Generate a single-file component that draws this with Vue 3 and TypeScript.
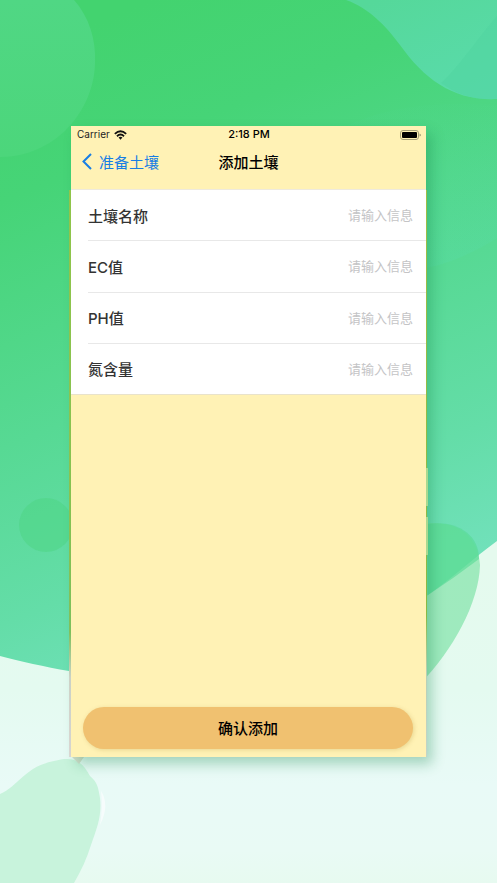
<script setup lang="ts">
import { reactive } from 'vue'

interface Field {
  id: string
  label: string
}

const fields: Field[] = [
  { id: 'name', label: '土壤名称' },
  { id: 'ec', label: 'EC值' },
  { id: 'ph', label: 'PH值' },
  { id: 'nitrogen', label: '氮含量' },
]

const values = reactive<Record<string, string>>({ name: '', ec: '', ph: '', nitrogen: '' })

function submit() {
  for (const field of fields) values[field.id] = values[field.id].trim()
}
</script>

<template>
  <div class="page">
    <svg class="backdrop" viewBox="0 0 497 883" preserveAspectRatio="none" aria-hidden="true">
      <defs>
        <linearGradient id="green" gradientUnits="userSpaceOnUse" x1="150" y1="0" x2="400" y2="600">
          <stop offset="0" stop-color="#43d36f" />
          <stop offset="0.2" stop-color="#46d477" />
          <stop offset="0.55" stop-color="#57d994" />
          <stop offset="0.8" stop-color="#64dda8" />
          <stop offset="1" stop-color="#72e1bc" />
        </linearGradient>
        <linearGradient id="pale" gradientUnits="userSpaceOnUse" x1="0" y1="560" x2="0" y2="883">
          <stop offset="0" stop-color="#e5faee" />
          <stop offset="0.4" stop-color="#e4faf0" />
          <stop offset="0.7" stop-color="#e9faf7" />
          <stop offset="0.9" stop-color="#e9faf5" />
          <stop offset="1" stop-color="#e7faf0" />
        </linearGradient>
        <linearGradient id="orb" x1="0" y1="0" x2="0" y2="1">
          <stop offset="0" stop-color="#50d784" />
          <stop offset="1" stop-color="#4cd67b" />
        </linearGradient>
        <linearGradient id="wave" x1="0.2" y1="0" x2="0.9" y2="1">
          <stop offset="0" stop-color="#55d89a" />
          <stop offset="1" stop-color="#5adbac" />
        </linearGradient>
        <linearGradient id="mist" x1="0" y1="0" x2="0" y2="1">
          <stop offset="0" stop-color="#58dba8" stop-opacity="0.1" />
          <stop offset="1" stop-color="#58dcae" stop-opacity="0.7" />
        </linearGradient>
        <linearGradient id="edge" x1="0" y1="0" x2="0" y2="1">
          <stop offset="0" stop-color="#98c94b" />
          <stop offset="0.55" stop-color="#8cc653" />
          <stop offset="0.78" stop-color="#84c45f" />
          <stop offset="0.86" stop-color="#d5d6cd" />
          <stop offset="1" stop-color="#e2dad8" />
        </linearGradient>
      </defs>
      <rect width="497" height="883" fill="url(#pale)" />
      <path d="M0 0H497V541C475 557 452 578 428 595C350 648 190 684 69 671C45 667 20 661 0 656Z" fill="url(#green)" />
      <path d="M0 0H74C89 17 96 39 95 63C94 111 55 157 0 157Z" fill="url(#orb)" />
      <path d="M346 0C369 8 386 26 400 45C425 80 454 101 497 99V0Z" fill="url(#wave)" />
      <path d="M497 16C480 35 460 66 441 83C458 95 474 100 497 99Z" fill="#4fd49f" fill-opacity="0.5" />
      <path d="M348 125C388 108 425 101 497 105V238C465 258 440 266 420 269V125Z" fill="url(#mist)" opacity="0.35" />
      <circle cx="46" cy="525" r="27" fill="#4fd585" fill-opacity="0.55" />
      <path d="M410 527C444 516 478 528 480 565C479 603 453 650 420 684V600Z" fill="#70e09c" fill-opacity="0.6" />
      <path d="M428 524C455 520 479 533 479 559Q454 578 428 595Z" fill="#56da94" fill-opacity="0.6" />
      <path d="M0 794C19 786 24 767 54 761C75 755 83 763 90 776C97 782 98 786 100 798C102 816 97 828 91 845C87 858 81 871 74 883H0Z" fill="#c8f3dc" />
      <path d="M101 791Q110 805 100 825Q103 807 101 791Z" fill="#f6fcfc" />
      <rect x="69" y="190" width="3" height="567" fill="url(#edge)" />
      <path d="M72 757H84L79 764Z" fill="#d4ddcb" />
    </svg>

    <main class="screen">
      <div class="status">
        <span class="carrier">
          Carrier
          <svg class="wifi" viewBox="0 0 14 10" aria-hidden="true">
            <g fill="none" stroke="#111" stroke-width="2">
              <path d="M0.9 3.8Q7-1.8 13.1 3.8" />
              <path d="M3.2 6.3Q7 2.8 10.8 6.3" />
            </g>
            <path d="M4.9 7.8Q7 6.1 9.1 7.8L7 10Z" fill="#111" />
          </svg>
        </span>
        <time class="clock">2:18 PM</time>
        <svg class="battery" viewBox="0 0 21 10" aria-hidden="true">
          <rect x="0.5" y="0.5" width="18" height="9" rx="2.5" fill="none" stroke="#a6a078" />
          <rect x="2" y="2" width="15" height="6" rx="1" fill="#000" />
          <path d="M19.5 3.4Q21 4 21 5T19.5 6.6Z" fill="#a6a078" />
        </svg>
      </div>

      <header class="nav">
        <a class="back" href="#">
          <svg class="chevron" viewBox="0 0 10 17" aria-hidden="true">
            <path d="M9 1L1.5 8.5L9 16" fill="none" stroke="#187ee4" stroke-width="2" />
          </svg>
          准备土壤
        </a>
        <h1 class="title">添加土壤</h1>
      </header>

      <form class="form" @submit.prevent="submit">
        <div class="fields">
          <div v-for="field in fields" :key="field.id" class="row">
            <label class="label" :for="field.id">{{ field.label }}</label>
            <input :id="field.id" v-model="values[field.id]" class="input" type="text" placeholder="请输入信息" />
          </div>
        </div>
        <button class="confirm" type="submit">确认添加</button>
      </form>
      <span class="edge"></span>
    </main>
  </div>
</template>

<style>
body {
  margin: 0;
}
</style>

<style scoped>
.page {
  position: relative;
  display: flex;
  box-sizing: border-box;
  min-height: 100vh;
  padding: 126px 71px;
  font-family: Inter, "Noto Sans CJK SC", sans-serif;
  color: #000;
}

.backdrop {
  position: absolute;
  inset: 0;
  width: 100%;
  height: 100%;
}

.screen {
  position: relative;
  display: flex;
  flex: 1;
  flex-direction: column;
  min-width: 0;
  background: #fff2b5;
  box-shadow: 6px 7px 12px rgb(20 130 70 / 32%);
}

.status {
  display: grid;
  grid-template-columns: 1fr auto 1fr;
  align-items: center;
  height: 17px;
  padding: 0 5px 0 6px;
  font-size: 11px;
  line-height: 17px;
}

.carrier {
  display: flex;
  align-items: center;
  gap: 4px;
  font-size: 10px;
  color: #222;
}

.wifi {
  width: 13px;
  height: 10px;
}

.clock {
  font-weight: 500;
}

.battery {
  justify-self: end;
  width: 21px;
  height: 10px;
}

.nav {
  display: grid;
  grid-template-columns: 1fr auto 1fr;
  align-items: center;
  height: 36px;
  padding: 0 11px 10px;
}

.back {
  display: flex;
  align-items: center;
  gap: 7px;
  font-size: 15px;
  color: #187ee4;
  text-decoration: none;
}

.chevron {
  width: 10px;
  height: 17px;
}

.title {
  margin: 0;
  font-size: 15px;
  font-weight: 500;
}

.form {
  display: flex;
  flex: 1;
  flex-direction: column;
}

.fields {
  display: flex;
  flex-direction: column;
  box-sizing: border-box;
  min-height: 206px;
  padding-left: 17px;
  border-top: 1px solid #eeeadd;
  border-bottom: 1px solid #e9e3cb;
  background: #fff;
}

.row {
  display: flex;
  flex: 1;
  align-items: center;
  padding-right: 13px;
}

.row + .row {
  border-top: 1px solid #e8e8e8;
}

.label {
  flex: none;
  font-size: 15px;
  font-weight: 500;
  color: #333;
}

.input {
  flex: 1;
  min-width: 0;
  padding: 0;
  border: 0;
  outline: 0;
  background: transparent;
  font: inherit;
  font-size: 13px;
  text-align: right;
  color: #333;
}

.input::placeholder {
  color: #c4c4c6;
}

.confirm {
  height: 42px;
  margin: auto 13px 8px 12px;
  padding: 0 0 2px;
  border: 0;
  border-radius: 21px;
  background: #f0c170;
  box-shadow: 1px 1px 4px rgb(180 150 60 / 30%);
  font: inherit;
  font-size: 15px;
  font-weight: 500;
  color: #000;
}

.edge {
  position: absolute;
  top: 64px;
  bottom: 0;
  left: 100%;
  width: 1px;
  background: linear-gradient(#a0be48, #8aba44 75%, #b8cfb6 85%, #c4d4c8);
}

.edge::before,
.edge::after {
  position: absolute;
  left: 0;
  width: 2px;
  height: 38px;
  background: #a9d990;
  content: "";
}

.edge::before {
  top: 278px;
}

.edge::after {
  top: 327px;
}
</style>
